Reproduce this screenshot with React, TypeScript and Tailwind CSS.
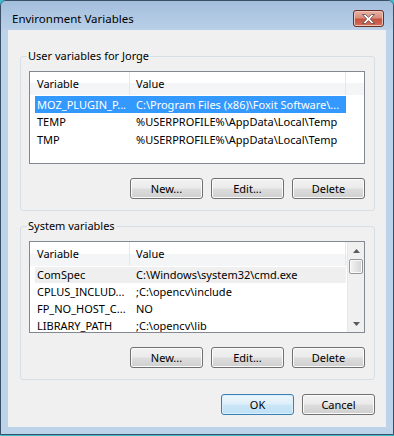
import React from 'react'

type Row = { name: string; value: string }

const userRows: Row[] = [
  { name: 'MOZ_PLUGIN_P...', value: 'C:\\Program Files (x86)\\Foxit Software\\...' },
  { name: 'TEMP', value: '%USERPROFILE%\\AppData\\Local\\Temp' },
  { name: 'TMP', value: '%USERPROFILE%\\AppData\\Local\\Temp' },
]

const systemRows: Row[] = [
  { name: 'ComSpec', value: 'C:\\Windows\\system32\\cmd.exe' },
  { name: 'CPLUS_INCLUD...', value: ';C:\\opencv\\include' },
  { name: 'FP_NO_HOST_C...', value: 'NO' },
  { name: 'LIBRARY_PATH', value: ';C:\\opencv\\lib' },
]

function WinButton({ label, isDefault }: { label: string; isDefault?: boolean }) {
  return (
    <button
      type="button"
      className={
        isDefault
          ? "h-[21px] w-[73px] rounded-[3px] border border-[#3c7fb1] bg-[linear-gradient(to_bottom,#edf6fc_0%,#deeffa_48%,#cbe6f7_52%,#bfe0f4_100%)] shadow-[inset_0_0_0_1px_#d8f0fd] text-black leading-[19px]"
          : "h-[21px] w-[73px] rounded-[3px] border border-[#707070] bg-[linear-gradient(to_bottom,#f2f2f2_0%,#ebebeb_48%,#dddddd_52%,#cfcfcf_100%)] shadow-[inset_0_0_0_1px_#fbfbfb] text-black leading-[19px]"
      }
    >
      {label}
    </button>
  )
}

function Arrow({ up }: { up?: boolean }) {
  return (
    <svg width="7" height="4" viewBox="0 0 7 4">
      <polygon points={up ? '3.5,0 7,4 0,4' : '0,0 7,0 3.5,4'} fill="#5a5a5a" />
    </svg>
  )
}

function ScrollBar() {
  return (
    <div className="flex h-full w-[17px] flex-col bg-[#f0f0f0] border-l border-[#e8e8e8]">
      <div className="flex h-[17px] items-center justify-center">
        <Arrow up />
      </div>
      <div className="mx-[1px] h-[15px] rounded-[2px] border border-[#979797] bg-[linear-gradient(to_right,#f4f4f4,#e4e4e4_50%,#d4d4d4)] shadow-[inset_0_0_0_1px_#fafafa]" />
      <div className="flex-1" />
      <div className="flex h-[17px] items-center justify-center">
        <Arrow />
      </div>
    </div>
  )
}

function ListView({
  rows,
  selected,
  inactive,
  height,
  compact,
  scroll,
}: {
  rows: Row[]
  selected: number
  inactive?: boolean
  height: string
  compact?: boolean
  scroll?: boolean
}) {
  return (
    <div className={`flex ${height} w-full border border-[#828790] bg-white`}>
      <div className="flex min-w-0 flex-1 flex-col overflow-hidden">
        <div
          className={`grid ${compact ? 'h-[24px]' : 'h-[23px]'} shrink-0 grid-cols-[100px_216px_1fr] bg-[linear-gradient(to_bottom,#ffffff_0%,#ffffff_50%,#f4f5f7_50%,#f4f5f7_100%)]`}
        >
          <div className="flex items-center border-r border-[#e3e8ee] pl-[7px]">Variable</div>
          <div className="flex items-center border-r border-[#e3e8ee] pl-[6px]">Value</div>
          <div />
        </div>
        {rows.map((r, i) => (
          <div key={r.name} className={`flex ${compact ? 'h-[17px]' : 'h-[18px]'} shrink-0 items-start`}>
            <div
              className={
                i === selected
                  ? inactive
                    ? "ml-[5px] mt-[1px] flex h-[16px] w-[311px] items-center bg-[#efefef] text-black"
                    : "ml-[5px] mt-[1px] flex h-[17px] w-[311px] items-center bg-[#3399ff] text-white"
                  : "ml-[5px] mt-[1px] flex h-[16px] w-[311px] items-center text-black"
              }
            >
              <span className="w-[95px] shrink-0 whitespace-nowrap pl-[2px]">{r.name}</span>
              <span className="whitespace-nowrap pl-[6px]">{r.value}</span>
            </div>
          </div>
        ))}
      </div>
      {scroll && <ScrollBar />}
    </div>
  )
}

function GroupBox({ title, children }: { title: string; children: React.ReactNode }) {
  return (
    <fieldset className="ml-[12px] w-[355px] rounded-[3px] border border-[#d5dfe5] pb-[11px] pl-[8px] pr-[9px] pt-[7px]">
      <legend className="-ml-[2px] px-[1px] leading-[16px]">{title}</legend>
      {children}
    </fieldset>
  )
}

export default function App() {
  return (
    <div className="h-[436px] w-[394px] bg-[#3cc2cf] font-['Noto_Sans',sans-serif] text-[11px] leading-[16px] text-black">
      <div className="flex h-[435px] w-[394px] flex-col rounded-t-[6px] border border-[#3b4f66] bg-[#bcd3ea]">
        {/* title bar */}
        <div className="flex h-[29px] shrink-0 items-start justify-between rounded-t-[5px] bg-[linear-gradient(to_bottom,#a3bedc,#bad0e9)]">
          <span className="ml-[11px] mt-[10px] text-[11.5px]">Environment Variables</span>
          <button
            type="button"
            className="mr-[9px] mt-[9px] flex h-[17px] w-[31px] items-center justify-center rounded-[3px] border border-[#6b2c24] bg-[linear-gradient(to_bottom,#e7b3a6_0%,#d98e7e_45%,#c5523f_55%,#d0705a_100%)] shadow-[inset_0_0_0_1px_#eec4b9]"
          >
            <svg width="13" height="10" viewBox="0 0 13 10">
              <polygon
                points="0.5,0.5 3.5,0.5 6.5,3.3 9.5,0.5 12.5,0.5 8.3,5 12.5,9.5 9.5,9.5 6.5,6.7 3.5,9.5 0.5,9.5 4.7,5"
                fill="#ffffff"
                stroke="#5b4545"
                strokeWidth="0.8"
              />
            </svg>
          </button>
        </div>

        {/* client area */}
        <div className="mx-[7px] flex flex-1 flex-col bg-[#f0f0f0]">
          <div className="mt-[18px]">
            <GroupBox title="User variables for Jorge">
              <ListView rows={userRows} selected={0} height="h-[93px]" />
              <div className="mt-[14px] flex justify-end gap-[8px]">
                <WinButton label="New..." />
                <WinButton label="Edit..." />
                <WinButton label="Delete" />
              </div>
            </GroupBox>
          </div>

          <div className="mt-[7px]">
            <GroupBox title="System variables">
              <ListView rows={systemRows} selected={0} inactive height="h-[92px]" compact scroll />
              <div className="mt-[14px] flex justify-end gap-[8px]">
                <WinButton label="New..." />
                <WinButton label="Edit..." />
                <WinButton label="Delete" />
              </div>
            </GroupBox>
          </div>

          <div className="mt-[14px] flex justify-end gap-[8px] pr-[11px]">
            <WinButton label="OK" isDefault />
            <WinButton label="Cancel" />
          </div>
        </div>
        <div className="h-[7px] shrink-0" />
      </div>
    </div>
  )
}
